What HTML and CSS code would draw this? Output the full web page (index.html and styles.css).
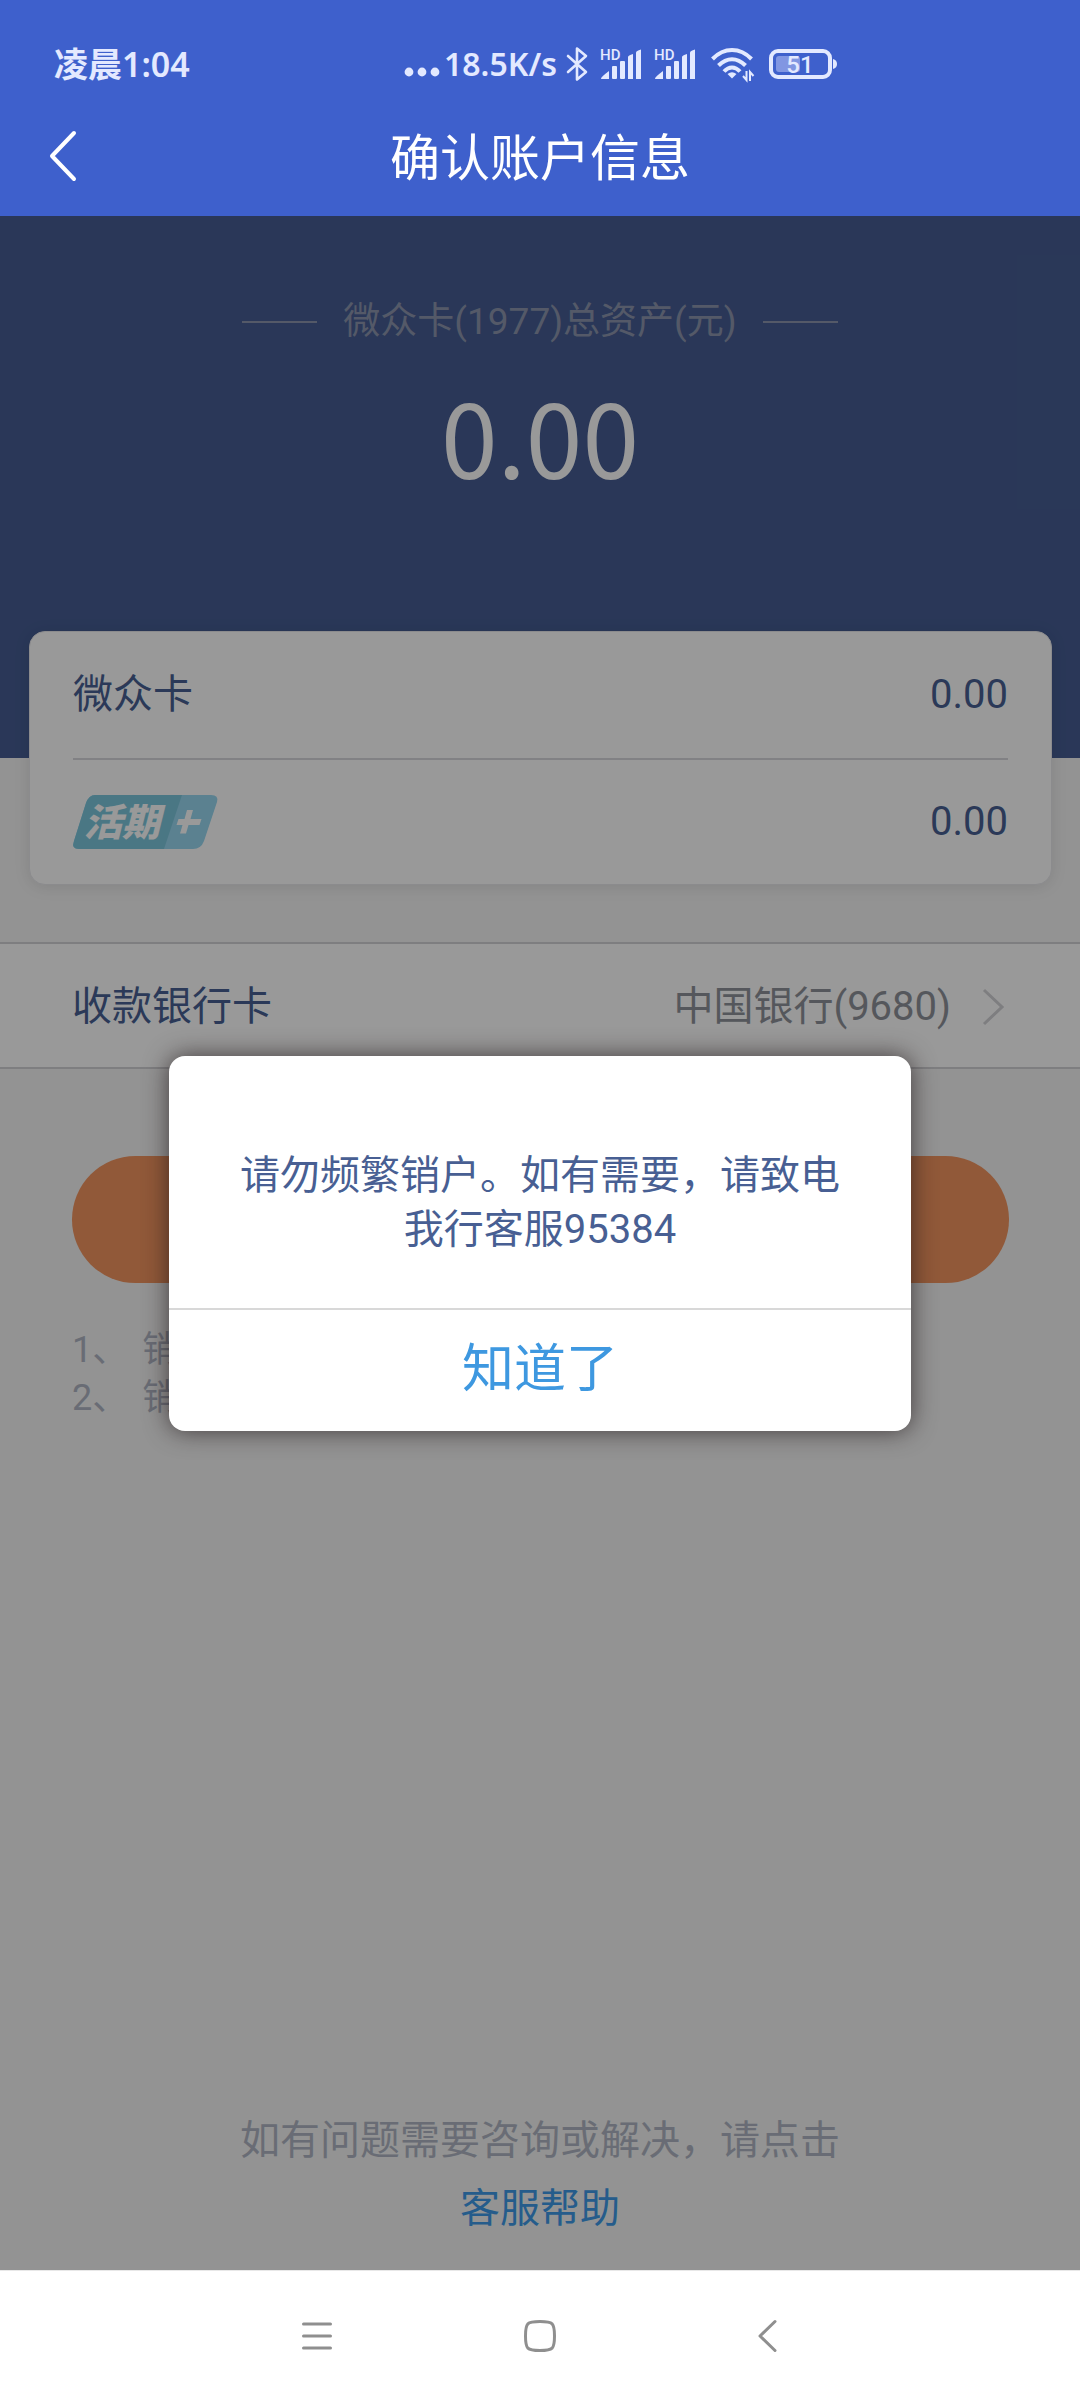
FILE: index.html
```html
<!DOCTYPE html>
<html lang="zh-CN">
<head>
<meta charset="utf-8">
<meta name="viewport" content="width=device-width, initial-scale=1">
<title>确认账户信息</title>
<link rel="stylesheet" href="styles.css">
</head>
<body>
<div class="screen">
  <header class="top">
    <div class="status">
      <span class="status-time">凌晨1:04</span>
      <div class="status-icons">
        <svg class="dots" width="36" height="36" viewBox="0 0 36 36" fill="currentColor"><circle cx="5" cy="26" r="4.4"/><circle cx="18" cy="26" r="4.4"/><circle cx="31" cy="26" r="4.4"/></svg>
        <span class="status-speed">18.5K/s</span>
        <svg class="bluetooth" width="22" height="36" viewBox="0 0 22 36" fill="none" stroke="currentColor" stroke-width="2.6" stroke-linejoin="round" stroke-linecap="round"><path d="M2 10 L20 26 L11 33.500 V2.500 L20 10 L2 26"/></svg>
        <svg class="signal" width="42" height="34" viewBox="0 0 42 34" fill="currentColor"><text x="0" y="13" class="hd">HD</text><path d="M1 31.500 Q1 30 9 24 V32 H2 Q1 32 1 31.500Z"/><rect x="12" y="19" width="5" height="13" rx="1"/><rect x="20" y="14" width="5" height="18" rx="1"/><path d="M28 10 Q28 8.500 33 7 V32 H28Z"/><path d="M36 5.500 Q36 4 41 2.500 V32 H36Z"/></svg>
        <svg class="signal" width="42" height="34" viewBox="0 0 42 34" fill="currentColor"><text x="0" y="13" class="hd">HD</text><path d="M1 31.500 Q1 30 9 24 V32 H2 Q1 32 1 31.500Z"/><rect x="12" y="19" width="5" height="13" rx="1"/><rect x="20" y="14" width="5" height="18" rx="1"/><path d="M28 10 Q28 8.500 33 7 V32 H28Z"/><path d="M36 5.500 Q36 4 41 2.500 V32 H36Z"/></svg>
        <svg class="wifi" width="44" height="36" viewBox="0 0 44 36" fill="none" stroke="currentColor" stroke-width="4"><path d="M1.500 13 C13 1 29 1 40.500 13"/><path d="M7.500 19.500 C16 11 26 11 34.500 19.500"/><path d="M13 25.500 C18 20 24 20 29 25.500"/><path d="M16.500 28 Q21 24.500 25.500 28 L21 32.500Z" fill="currentColor" stroke="none"/><path d="M35.500 25 V34 L32 30 M39 35 V26 L42.500 30" stroke-width="2"/></svg>
        <svg class="battery" width="68" height="30" viewBox="0 0 68 30"><rect x="7" y="7" width="24" height="16" rx="3" fill="#8196e2"/><rect x="2" y="2" width="59" height="26" rx="7" fill="none" stroke="currentColor" stroke-width="4"/><path d="M64 10 Q68 11 68 15 Q68 19 64 20Z" fill="currentColor"/><text x="31" y="24" class="level">51</text></svg>
      </div>
    </div>
    <div class="titlebar">
      <button class="back" type="button" aria-label="返回"><svg width="28" height="52" viewBox="0 0 28 52" fill="none" stroke="currentColor" stroke-width="4" stroke-linecap="round" stroke-linejoin="round"><path d="M25 3 L3 26 L25 49"/></svg></button>
      <h1 class="title">确认账户信息</h1>
    </div>
  </header>

  <main class="content">
    <section class="hero">
      <div class="hero-label"><span>微众卡(1977)总资产(元)</span></div>
      <div class="hero-amount">0.00</div>
    </section>
    <section class="card">
      <div class="card-row"><span>微众卡</span><span>0.00</span></div>
      <div class="card-row">
        <svg class="badge" width="145" height="54" viewBox="0 0 145 54" role="img" aria-label="活期+"><path d="M22 0 H138 Q146 0 144 7 L131 46 Q128 54 120 54 H6 Q-2 54 1 46 L13 8 Q16 0 22 0Z" fill="#98d7f0"/><path d="M22 0 H109 L91 54 H6 Q-2 54 1 46 L13 8 Q16 0 22 0Z" fill="#7cc7dd"/><text x="11" y="41" class="badge-text">活期</text><path d="M114 15 H120 L117.500 24 H128.500 L126.500 30 H115.500 L113 38.500 H107 L109.500 30 H103.500 L105.500 24 H111.500Z" fill="#fff"/></svg>
        <span>0.00</span>
      </div>
    </section>
    <a class="bank" href="#">
      <span>收款银行卡</span>
      <span class="bank-value">中国银行(9680)<svg width="22" height="38" viewBox="0 0 22 38" fill="none" stroke="#d2d2d6" stroke-width="3"><path d="M2 2 L20 19 L2 36"/></svg></span>
    </a>
    <button class="submit" type="button" aria-label="确认"></button>
    <ul class="notes">
      <li><span>1、</span><span>销户</span></li>
      <li><span>2、</span><span>销户</span></li>
    </ul>
    <footer class="help">
      <p>如有问题需要咨询或解决，请点击</p>
      <a href="#">客服帮助</a>
    </footer>

    <div class="overlay">
      <div class="dialog" role="alertdialog" aria-modal="true" aria-labelledby="dialog-text">
        <p class="dialog-text" id="dialog-text">请勿频繁销户。如有需要，请致电我行客服95384</p>
        <button class="dialog-button" type="button">知道了</button>
      </div>
    </div>
  </main>

  <nav class="system-nav">
    <button type="button" aria-label="菜单"><svg width="32" height="32" viewBox="0 0 32 32" fill="none" stroke="currentColor" stroke-width="3" stroke-linecap="round"><path d="M3.500 4 H30.500 M3.500 16 H30.500 M3.500 28 H30.500"/></svg></button>
    <button type="button" aria-label="主屏幕"><svg width="32" height="32" viewBox="0 0 32 32" fill="none" stroke="currentColor" stroke-width="3"><path d="M16 1.500 C29 1.500 30.500 3 30.500 16 C30.500 29 29 30.500 16 30.500 C3 30.500 1.500 29 1.500 16 C1.500 3 3 1.500 16 1.500Z"/></svg></button>
    <button type="button" aria-label="返回"><svg width="32" height="32" viewBox="0 0 32 32" fill="none" stroke="currentColor" stroke-width="3" stroke-linecap="round" stroke-linejoin="round"><path d="M27 1.500 L12 16 L27 30.500"/></svg></button>
  </nav>
</div>
</body>
</html>
```

FILE: styles.css
```css
* { box-sizing: border-box; }

body {
  margin: 0;
  font-family: Roboto, "Noto Sans CJK SC", sans-serif;
  font-size: 40px;
  line-height: 54px;
  color: #485f93;
}

h1, p, ul { margin: 0; padding: 0; font-weight: 400; }
svg { display: block; flex: none; overflow: visible; }
a { color: inherit; text-decoration: none; }
button { padding: 0; border: 0; background: none; color: inherit; font: inherit; }

.screen {
  display: flex;
  flex-direction: column;
  min-height: 100vh;
}

/* Status bar and title */
.top {
  height: 216px;
  background: #3e60cc;
  color: #fff;
}

.status {
  display: flex;
  justify-content: space-between;
  align-items: center;
  height: 100px;
  padding: 28px 243px 0 54px;
  color: #e3e9ff;
  font-family: "Noto Sans", "Noto Sans CJK SC", sans-serif;
  font-weight: 600;
}
.status-time { font-size: 34px; }
.status-icons { display: flex; align-items: center; }
.status-speed { margin-left: 4px; font-size: 32px; }
.bluetooth { margin-left: 9px; }
.signal { margin-left: 12px; }
.wifi { margin-left: 15px; }
.battery { margin-left: 14px; }
.hd { font: 500 15px Roboto, sans-serif; }
.level { font: 500 24px Roboto, sans-serif; fill: #e3e9ff; text-anchor: middle; }

.titlebar {
  display: grid;
  grid-template-columns: 126px 1fr 126px;
  align-items: center;
  height: 112px;
}
.back { justify-self: center; }
.title { padding-top: 6px; font-size: 50px; line-height: 72px; text-align: center; }

/* Account page */
.content {
  position: relative;
  display: flex;
  flex-direction: column;
  flex: 1;
  background: #f5f5f5;
}

.hero {
  height: 542px;
  padding-top: 79px;
  background: #465d93;
  text-align: center;
}
.hero-label {
  display: flex;
  justify-content: center;
  align-items: center;
  gap: 26px;
  color: #8c95ad;
  font-size: 37px;
}
.hero-label::before,
.hero-label::after {
  content: "";
  width: 75px;
  height: 2px;
  background: #8c95ad;
}
.hero-amount {
  margin-top: 14px;
  color: #fff;
  font-family: "Noto Sans CJK SC", sans-serif;
  font-size: 102px;
  line-height: 144px;
}

.card {
  margin: -127px 28px 0 29px;
  padding: 0 43px;
  border: 1px solid #e8e8ec;
  border-radius: 16px;
  background: #fff;
  box-shadow: 0 2px 16px rgba(0, 0, 0, 0.1);
}
.card-row {
  display: flex;
  justify-content: space-between;
  align-items: center;
  height: 126px;
}
.card-row + .card-row { border-top: 2px solid #d8d8dc; }
.badge-text { font: oblique 900 38px "Noto Sans CJK SC", sans-serif; fill: #fff; }

.bank {
  display: flex;
  justify-content: space-between;
  align-items: center;
  height: 127px;
  margin-top: 57px;
  padding: 2px 76px 0 72px;
  border: solid #d2d2d6;
  border-width: 2px 0;
  background: #fff;
}
.bank-value {
  display: flex;
  align-items: center;
  gap: 31px;
  color: #8e9299;
}

.submit {
  height: 127px;
  margin: 87px 71px 0 72px;
  border-radius: 64px;
  background: #f2945f;
}

.notes {
  margin: 43px 72px 0;
  color: #b0b5c3;
  font-size: 36px;
  line-height: 48px;
  list-style: none;
}
.notes li { display: flex; gap: 14px; }

.help {
  margin-top: auto;
  padding-bottom: 27px;
  color: #b0b5c3;
  line-height: 68px;
  text-align: center;
}
.help a { color: #3e9ae8; }

/* Alert */
.overlay {
  position: absolute;
  inset: 0;
  display: flex;
  justify-content: center;
  align-items: center;
  background: rgba(0, 0, 0, 0.4);
}
.dialog {
  width: 742px;
  max-width: 90%;
  border-radius: 16px;
  background: #fff;
  box-shadow: 0 0 24px rgba(30, 20, 22, 0.7);
  text-align: center;
}
.dialog-text { padding: 93px 64px 51px; }
.dialog-button {
  width: 100%;
  height: 123px;
  border-top: 2px solid #d8d8d8;
  color: #3e98e0;
  font-size: 52px;
}

/* System navigation */
.system-nav {
  display: flex;
  justify-content: center;
  align-items: center;
  gap: 192px;
  height: 130px;
  border-top: 1px solid #e8e8e8;
  background: #fff;
  color: #8f8f8f;
}
```
